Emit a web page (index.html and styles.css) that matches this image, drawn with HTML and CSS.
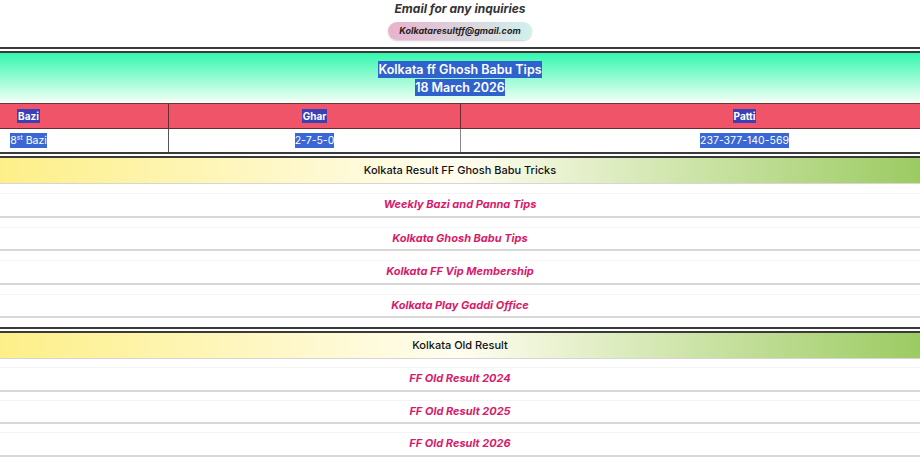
FILE: index.html
```html
<!DOCTYPE html>
<html lang="en">
<head>
    <meta charset="UTF-8">
    <title>Kolkata ff Ghosh Babu Tips</title>
    <link rel="stylesheet" href="styles.css">
</head>
<body>
    <div class="contact">
        <p class="ask">Email for any inquiries</p>
        <span class="pill">Kolkataresultff@gmail.com</span>
    </div>

    <div class="tips">
        <div class="tips-head">
            <span class="sel">Kolkata ff Ghosh Babu Tips</span><br>
            <span class="sel">18 March 2026</span>
        </div>
        <table class="chart">
            <tr>
                <th class="first"><span class="lead"><span class="sel">Bazi</span></span></th>
                <th class="mid"><span class="sel">Ghar</span></th>
                <th class="last"><span class="sel">Patti</span></th>
            </tr>
            <tr>
                <td class="first"><span class="lead"><span class="sel">8<sup>st</sup> Bazi</span></span></td>
                <td class="mid"><span class="sel">2-7-5-0</span></td>
                <td class="last"><span class="sel">237-377-140-569</span></td>
            </tr>
        </table>
    </div>

    <div class="panel">
        <div class="panel-title">Kolkata Result FF Ghosh Babu Tricks</div>
        <div class="row"><a href="#">Weekly Bazi and Panna Tips</a></div>
        <div class="row"><a href="#">Kolkata Ghosh Babu Tips</a></div>
        <div class="row"><a href="#">Kolkata FF Vip Membership</a></div>
        <div class="row"><a href="#">Kolkata Play Gaddi Office</a></div>
    </div>

    <div class="panel boxed">
        <div class="panel-title">Kolkata Old Result</div>
        <div class="row"><a href="#">FF Old Result 2024</a></div>
        <div class="row"><a href="#">FF Old Result 2025</a></div>
        <div class="row"><a href="#">FF Old Result 2026</a></div>
    </div>
</body>
</html>
```

FILE: styles.css
```css
body {
    margin: 0;
    font-family: Inter, "Noto Sans", sans-serif;
    color: #222;
    overflow: hidden;
}
.contact {
    text-align: center;
    height: 47px;
}
.ask {
    margin: 0;
    padding-top: 1px;
    font-size: 12px;
    line-height: 16px;
    font-weight: 700;
    font-style: italic;
    color: #333;
}
.pill {
    display: inline-block;
    margin-top: 5px;
    padding: 0 11px;
    height: 18px;
    line-height: 18px;
    border-radius: 9px;
    font-size: 9px;
    font-weight: 700;
    font-style: italic;
    background: linear-gradient(to right, #e8b2cc, #d0f1ed);
    box-shadow: 0 1px 2px rgba(0, 0, 0, 0.2);
}
.sel {
    background: #2f62cd;
    color: #fff;
}
.tips {
    border-top: 6px double #3a3a3a;
    border-bottom: 6px double #3a3a3a;
    overflow: hidden;
}
.tips-head {
    text-align: center;
    padding: 8px 0 6px;
    font-size: 12.5px;
    line-height: 18px;
    font-weight: 600;
    background: linear-gradient(to bottom, #34f7ae, #f4fff7);
}
.tips-head .sel {
    padding: 1px 0;
}
.chart {
    width: 1028px;
    border-collapse: collapse;
    table-layout: fixed;
}
.chart th, .chart td {
    padding: 0;
    text-align: center;
}
.chart th {
    height: 24px;
    font-size: 10px;
    font-weight: 700;
    background: #f05468;
    border-top: 1px solid #7a3038;
    border-bottom: 1px solid #6b2a32;
}
.chart th .sel {
    background: #3a40b6;
    padding: 1px 1px;
}
.chart td {
    height: 23px;
    font-size: 10.5px;
    background: #fff;
}
.chart td .sel {
    background: #3a67d4;
    padding: 1px 0;
}
.chart .first {
    width: 168px;
    text-align: left;
}
.chart .mid {
    width: 291px;
    border-left: 1px solid #555;
    border-right: 1px solid #888;
}
.chart th.mid {
    border-left-color: #6b2a32;
    border-right-color: #6b2a32;
}
.lead {
    display: inline-block;
    width: 57px;
    text-align: center;
}
sup {
    font-size: 7px;
    line-height: 0;
}
.panel-title {
    height: 25px;
    line-height: 25px;
    text-align: center;
    font-size: 11px;
    font-weight: 500;
    color: #111;
    background: linear-gradient(to right, #fdef88, #fffdf0 50%, #9ccb62);
    border-bottom: 1px solid #d6d6d6;
}
.row {
    padding-top: 9px;
    border-bottom: 2px solid #d8d8d8;
    text-align: center;
}
.row a {
    display: block;
    height: 21.5px;
    line-height: 21.5px;
    border-top: 1px solid #f4f4f4;
    font-size: 11px;
    font-weight: 700;
    font-style: italic;
    color: #d81b6a;
    text-decoration: none;
}
.boxed {
    margin-top: 9px;
    border-top: 6px double #3a3a3a;
}
.boxed .row {
    padding-top: 8px;
}
```
